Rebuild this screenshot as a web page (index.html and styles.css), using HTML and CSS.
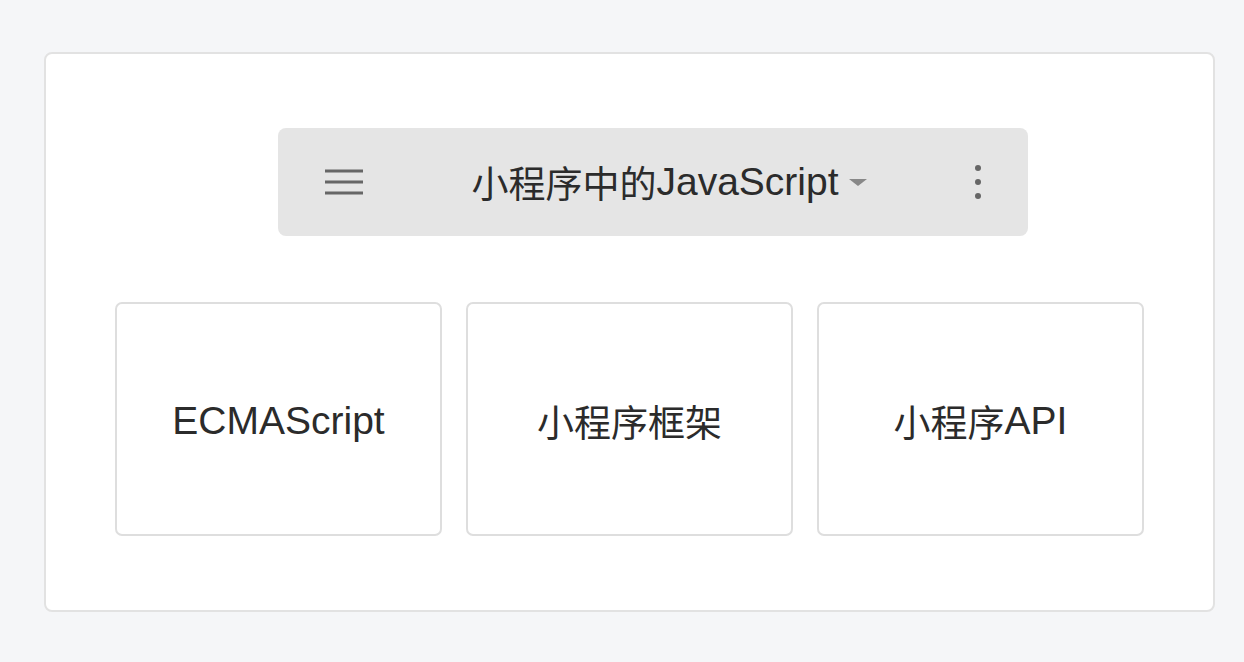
FILE: index.html
```html
<!DOCTYPE html>
<html lang="zh">
<head>
<meta charset="utf-8">
<title>小程序中的JavaScript</title>
<link rel="stylesheet" href="styles.css">
</head>
<body>
<div class="panel">
  <div class="toolbar">
    <span class="icon-menu">
      <svg width="40" height="28" viewBox="0 0 40 28"><g stroke="#666" stroke-width="3.2"><line x1="1" y1="3" x2="39" y2="3"/><line x1="1" y1="14" x2="39" y2="14"/><line x1="1" y1="25" x2="39" y2="25"/></g></svg>
    </span>
    <span class="title">小程序中的<span class="lat">JavaScript</span><svg class="caret" width="18" height="8" viewBox="0 0 18 8"><path d="M0 0 L18 0 L9 7 Z" fill="#888"/></svg></span>
    <span class="icon-more">
      <svg width="8" height="36" viewBox="0 0 8 36"><g fill="#666"><circle cx="4" cy="4" r="3"/><circle cx="4" cy="18" r="3"/><circle cx="4" cy="32" r="3"/></g></svg>
    </span>
  </div>
  <div class="cards">
    <div class="card"><span class="lat">ECMAScript</span></div>
    <div class="card">小程序框架</div>
    <div class="card">小程序<span class="lat">API</span></div>
  </div>
</div>
</body>
</html>
```
FILE: styles.css
```css
html, body {
  margin: 0;
  padding: 0;
  background: #f5f6f8;
  font-family: "Liberation Sans", "Noto Sans CJK SC", sans-serif;
  color: #2b2b2b;
}
body {
  padding: 52px 0 0 44px;
}
.panel {
  box-sizing: border-box;
  width: 1171px;
  height: 560px;
  background: #fff;
  border: 2px solid #e2e2e2;
  border-radius: 8px;
  padding-top: 74px;
}
.toolbar {
  box-sizing: border-box;
  margin-left: 232px;
  width: 750px;
  height: 108px;
  background: #e5e5e5;
  border-radius: 8px;
  display: flex;
  align-items: center;
  padding: 0 46px 0 46px;
}
.icon-menu {
  display: flex;
  width: 40px;
}
.title {
  flex: 1;
  display: flex;
  align-items: center;
  justify-content: center;
  font-size: 37px;
}
.lat {
  font-size: 39px;
}
.caret {
  margin-left: 10px;
  margin-top: 2px;
}
.icon-more {
  display: flex;
  width: 8px;
}
.cards {
  display: flex;
  gap: 24px;
  margin-top: 66px;
  padding-left: 69px;
}
.card {
  box-sizing: border-box;
  width: 327px;
  height: 234px;
  border: 2px solid #dedede;
  border-radius: 7px;
  display: flex;
  align-items: center;
  justify-content: center;
  font-size: 37px;
  padding-top: 4px;
}
```
